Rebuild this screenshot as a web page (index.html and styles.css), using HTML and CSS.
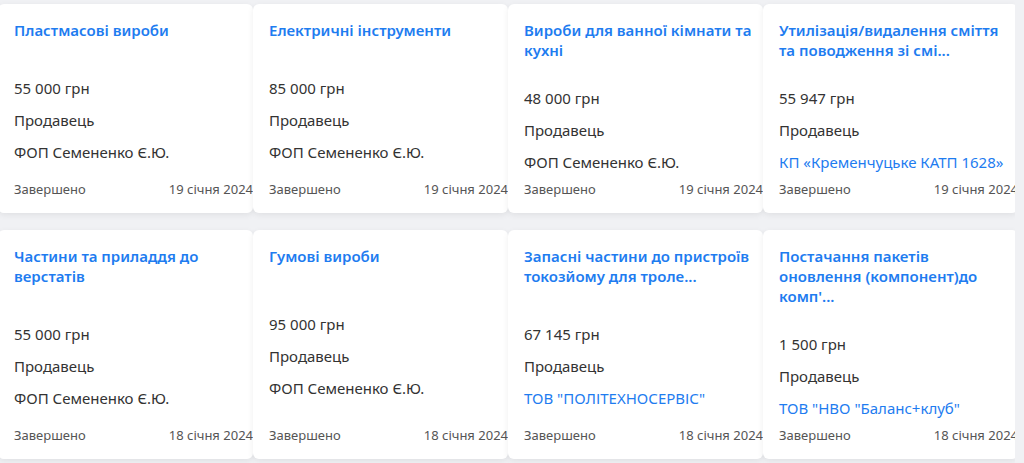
FILE: index.html
```html
<!DOCTYPE html>
<html lang="uk">
<head>
  <meta charset="UTF-8" />
  <meta name="viewport" content="width=device-width, initial-scale=1.0"/>
  <title>Завершені аукціони</title>
  <link rel="stylesheet" href="styles.css">
</head>
<body>
  <div class="wrap">
    <div class="lots">

      <div class="lot">
        <a class="lot-title" href="#">Пластмасові вироби</a>
        <div class="lot-info">
          <div>55 000 грн</div>
          <div>Продавець</div>
          <div>ФОП Семененко Є.Ю.</div>
        </div>
        <div class="lot-foot"><span>Завершено</span><span>19 січня 2024</span></div>
      </div>

      <div class="lot">
        <a class="lot-title" href="#">Електричні інструменти</a>
        <div class="lot-info">
          <div>85 000 грн</div>
          <div>Продавець</div>
          <div>ФОП Семененко Є.Ю.</div>
        </div>
        <div class="lot-foot"><span>Завершено</span><span>19 січня 2024</span></div>
      </div>

      <div class="lot">
        <a class="lot-title" href="#">Вироби для ванної кімнати та кухні</a>
        <div class="lot-info">
          <div>48 000 грн</div>
          <div>Продавець</div>
          <div>ФОП Семененко Є.Ю.</div>
        </div>
        <div class="lot-foot"><span>Завершено</span><span>19 січня 2024</span></div>
      </div>

      <div class="lot">
        <a class="lot-title" href="#">Утилізація/видалення сміття та поводження зі смі...</a>
        <div class="lot-info">
          <div>55 947 грн</div>
          <div>Продавець</div>
          <a class="seller" href="#">КП «Кременчуцьке КАТП 1628»</a>
        </div>
        <div class="lot-foot"><span>Завершено</span><span>19 січня 2024</span></div>
      </div>

      <div class="lot">
        <a class="lot-title" href="#">Частини та приладдя до верстатів</a>
        <div class="lot-info">
          <div>55 000 грн</div>
          <div>Продавець</div>
          <div>ФОП Семененко Є.Ю.</div>
        </div>
        <div class="lot-foot"><span>Завершено</span><span>18 січня 2024</span></div>
      </div>

      <div class="lot">
        <a class="lot-title" href="#">Гумові вироби</a>
        <div class="lot-info">
          <div>95 000 грн</div>
          <div>Продавець</div>
          <div>ФОП Семененко Є.Ю.</div>
        </div>
        <div class="lot-foot"><span>Завершено</span><span>18 січня 2024</span></div>
      </div>

      <div class="lot">
        <a class="lot-title" href="#">Запасні частини до пристроїв токозйому для троле...</a>
        <div class="lot-info">
          <div>67 145 грн</div>
          <div>Продавець</div>
          <a class="seller" href="#">ТОВ "ПОЛІТЕХНОСЕРВІС"</a>
        </div>
        <div class="lot-foot"><span>Завершено</span><span>18 січня 2024</span></div>
      </div>

      <div class="lot">
        <a class="lot-title" href="#">Постачання пакетів оновлення (компонент)до комп'...</a>
        <div class="lot-info">
          <div>1 500 грн</div>
          <div>Продавець</div>
          <a class="seller" href="#">ТОВ "НВО "Баланс+клуб"</a>
        </div>
        <div class="lot-foot"><span>Завершено</span><span>18 січня 2024</span></div>
      </div>

    </div>
  </div>
</body>
</html>
```

FILE: styles.css
```css
body {
  font-family: 'Noto Sans', 'Open Sans', sans-serif;
  background-color: #f0f1f4;
  margin: 0;
  padding: 0;
  color: #333;
  overflow: hidden;
}
.wrap {
  width: 1015px;
  padding: 4px 0;
  overflow: hidden;
}
.lots {
  display: grid;
  grid-template-columns: repeat(4, 255px);
  row-gap: 17px;
  margin-left: -2px;
}
.lot {
  display: flex;
  flex-direction: column;
  padding: 16px 0 14px 16px;
  background-color: white;
  border-radius: 6px;
  box-shadow: 0 2px 6px rgba(0,0,0,0.07);
  overflow: hidden;
}
.lot-title {
  padding-right: 6px;
  font-size: 15px;
  font-weight: 600;
  line-height: 20px;
  color: #1e7cf0;
  text-decoration: none;
}
.lot-info {
  display: flex;
  flex-direction: column;
  gap: 12px;
  margin: auto 0;
  padding: 28px 0 7px;
  font-size: 15px;
  line-height: 20px;
  white-space: nowrap;
}
.seller {
  color: #1e7cf0;
  text-decoration: none;
}
.lot-foot {
  display: flex;
  justify-content: space-between;
  font-size: 13px;
  line-height: 20px;
  color: #555;
  white-space: nowrap;
}
```
